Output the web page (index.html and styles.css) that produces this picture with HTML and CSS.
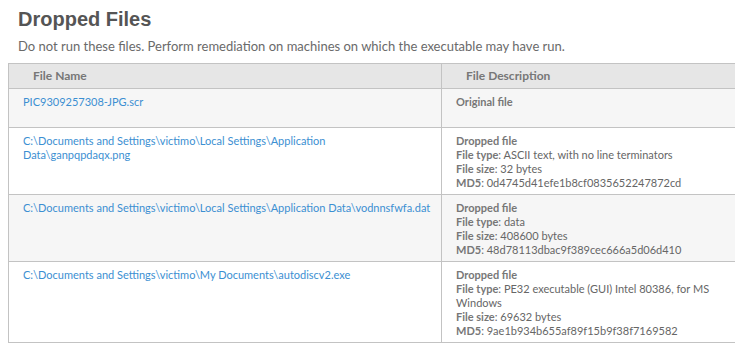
FILE: index.html
```html
<!DOCTYPE html>
<html lang="en">
<head>
    <meta charset="UTF-8">
    <title>Dropped Files</title>
    <link rel="stylesheet" href="styles.css">
</head>
<body>
    <div class="section-head">
        <h1>Dropped Files</h1>
        <p class="note">Do not run these files. Perform remediation on machines on which the executable may have run.</p>
    </div>
    <table class="files">
        <thead>
            <tr>
                <th class="col-name">File Name</th>
                <th>File Description</th>
            </tr>
        </thead>
        <tbody>
            <tr class="short">
                <td class="path"><a href="#">PIC9309257308-JPG.scr</a></td>
                <td><b>Original file</b></td>
            </tr>
            <tr>
                <td class="path"><a href="#">C:\Documents and Settings\victimo\Local Settings\Application<br>Data\ganpqpdaqx.png</a></td>
                <td>
                    <b>Dropped file</b><br>
                    <b>File type</b>: ASCII text, with no line terminators<br>
                    <b>File size</b>: 32 bytes<br>
                    <b>MD5</b>: 0d4745d41efe1b8cf0835652247872cd
                </td>
            </tr>
            <tr>
                <td class="path"><a href="#">C:\Documents and Settings\victimo\Local Settings\Application Data\vodnnsfwfa.dat</a></td>
                <td>
                    <b>Dropped file</b><br>
                    <b>File type</b>: data<br>
                    <b>File size</b>: 408600 bytes<br>
                    <b>MD5</b>: 48d78113dbac9f389cec666a5d06d410
                </td>
            </tr>
            <tr>
                <td class="path"><a href="#">C:\Documents and Settings\victimo\My Documents\autodiscv2.exe</a></td>
                <td>
                    <b>Dropped file</b><br>
                    <b>File type</b>: PE32 executable (GUI) Intel 80386, for MS Windows<br>
                    <b>File size</b>: 69632 bytes<br>
                    <b>MD5</b>: 9ae1b934b655af89f15b9f38f7169582
                </td>
            </tr>
        </tbody>
    </table>
</body>
</html>
```

FILE: styles.css
```css
body {
    margin: 8px;
    background: #fff;
    font-family: Lato, "Liberation Sans", sans-serif;
    color: #666;
}

.section-head {
    padding: 0 10px;
}

h1 {
    font-family: "Liberation Sans", Arial, sans-serif;
    font-size: 20px;
    font-weight: bold;
    line-height: 23px;
    color: #555;
    margin: 0;
}

.note {
    font-size: 13px;
    line-height: 16px;
    margin: 7px 0 9px;
    color: #6a6a6a;
}

.files {
    width: 734px;
    border-collapse: collapse;
    border: 1px solid #c3c3c3;
    font-size: 11px;
    line-height: 14px;
}

.files th {
    background: #e6e6e6;
    color: #777;
    font-size: 12px;
    font-weight: bold;
    text-align: left;
    height: 24px;
    padding: 0 24px;
    border: 1px solid #c3c3c3;
}

.files th.col-name {
    width: 384px;
}

.files td {
    vertical-align: top;
    padding: 6px 14px 4px;
    border: 1px solid #c3c3c3;
}

.files td.path {
    padding-right: 2px;
}

.files tbody tr:nth-child(odd) {
    background: #f6f6f6;
}

.files tr.short td {
    padding-bottom: 18px;
}

.files a {
    color: #3c8fd2;
    text-decoration: none;
}

.files b {
    color: #777;
}
```
